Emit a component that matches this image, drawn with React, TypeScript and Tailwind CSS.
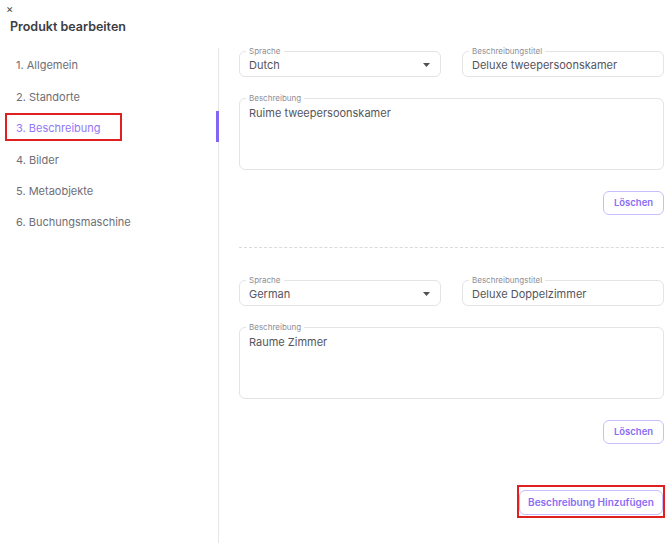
import { ReactNode } from 'react';

const steps = [
    '1. Allgemein',
    '2. Standorte',
    '3. Beschreibung',
    '4. Bilder',
    '5. Metaobjekte',
    '6. Buchungsmaschine',
];

const descriptions = [
    { language: 'Dutch', title: 'Deluxe tweepersoonskamer', text: 'Ruime tweepersoonskamer' },
    { language: 'German', title: 'Deluxe Doppelzimmer', text: 'Raume Zimmer' },
];

const Outlined = ({ label, className, children }: { label: string; className: string; children: ReactNode }) => (
    <div className={`relative rounded-[6px] border border-[#e3e3e8] text-[11px] leading-[14px] ${className}`}>
        <span className="absolute -top-[6px] left-[6px] bg-white px-[3px] text-[8px] leading-[10px] text-[#8e8e96]">
            {label}
        </span>
        {children}
    </div>
);

const DescriptionBlock = ({ language, title, text }: { language: string; title: string; text: string }) => (
    <div className="flex flex-col">
        <div className="grid grid-cols-2 gap-[21px]">
            <Outlined label="Sprache" className="h-[26px] flex items-center justify-between pl-[9px] pr-[10px] pt-[2px]">
                <span className="text-[#55555c]">{language}</span>
                <svg width="7" height="4" viewBox="0 0 7 4">
                    <path d="M0 0h7L3.5 4z" fill="#505057" />
                </svg>
            </Outlined>
            <Outlined label="Beschreibungstitel" className="h-[26px] flex items-center pl-[9px] pt-[2px]">
                <span className="text-[#55555c]">{title}</span>
            </Outlined>
        </div>
        <Outlined label="Beschreibung" className="mt-[21px] h-[72px] pl-[9px] pt-[7px]">
            <span className="text-[#55555c]">{text}</span>
        </Outlined>
        <div className="mt-[21px] flex justify-end">
            <button className="h-[24px] w-[61px] rounded-[6px] border border-[#cbbdfd] text-[9.5px] font-semibold text-[#8a6cf5]">
                Löschen
            </button>
        </div>
    </div>
);

export default function App() {
    return (
        <div
            className="w-[670px] h-[543px] bg-white flex flex-col overflow-hidden"
            style={{ fontFamily: 'Inter, "Noto Sans", sans-serif' }}
        >
            <div className="h-[48px] flex flex-col">
                <span className="pl-[6px] pt-[3px] text-[11px] leading-[12px] text-[#444]">×</span>
                <h1 className="pl-[10px] pt-[3px] text-[12.5px] font-semibold text-[#3c3c44]">Produkt bearbeiten</h1>
            </div>

            <div className="flex flex-1">
                <nav className="w-[219px] border-r border-[#e6e6ea] flex flex-col">
                    {steps.map((step, i) =>
                        i === 2 ? (
                            <div key={step} className="relative h-[31.4px] flex items-center">
                                <span className="ml-[5px] mt-[2px] w-[117px] h-[28px] flex items-center pl-[9px] pt-[2px] border-2 border-[#e02020] text-[11px] text-[#9278f7]">
                                    {step}
                                </span>
                                <span className="absolute right-[-1px] top-0 h-full w-[3px] bg-[#8466f6]" />
                            </div>
                        ) : (
                            <div key={step} className="h-[31.4px] flex items-center pl-[16px] pt-[4px] text-[11px] text-[#6e6e76]">
                                {step}
                            </div>
                        )
                    )}
                </nav>

                <main className="flex-1 pl-[20px] pr-[6px] pt-[3px] flex flex-col">
                    <DescriptionBlock {...descriptions[0]} />
                    <div className="mt-[32px] mb-[32px] border-t border-dashed border-[#d9d9de]" />
                    <DescriptionBlock {...descriptions[1]} />
                    <div className="mt-[41px] flex justify-end">
                        <div className="border-2 border-[#e02020] py-[1px] mr-[-1px]">
                            <button className="h-[25px] w-[144px] rounded-[6px] border border-[#cbbdfd] text-[10px] font-semibold text-[#8a6cf5]">
                                Beschreibung Hinzufügen
                            </button>
                        </div>
                    </div>
                </main>
            </div>
        </div>
    );
}
